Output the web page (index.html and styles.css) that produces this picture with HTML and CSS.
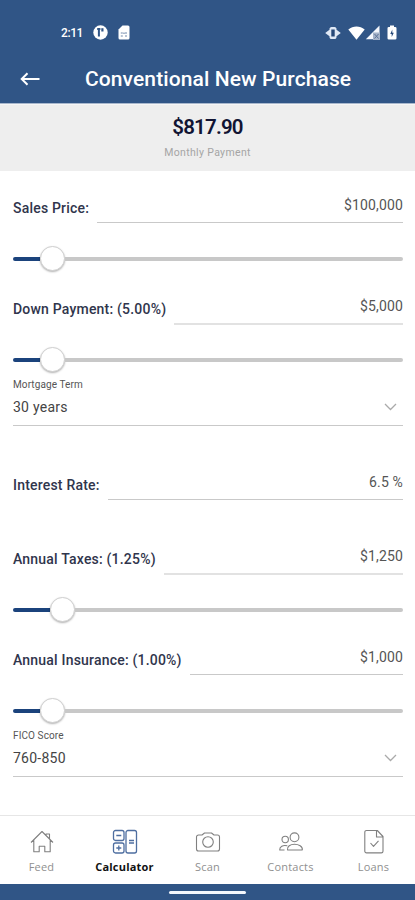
FILE: index.html
```html
<!DOCTYPE html>
<html lang="en">
<head>
<meta charset="utf-8">
<title>Conventional New Purchase</title>
<link rel="stylesheet" href="styles.css">
</head>
<body>
<div class="app">
  <header class="header">
    <div class="status">
      <span class="time">2:11</span>
      <svg class="s-app" width="15" height="15" viewBox="0 0 15 15"><circle cx="7.500" cy="7.500" r="7.200" fill="#fff"/><path d="M4.200 4h3.200M5.900 4v7.500" fill="none" stroke="#305586" stroke-width="2"/><path d="M8.300 3.200h2.200v3.300H8.300z" fill="#305586"/></svg>
      <svg class="s-sim" width="12" height="15" viewBox="0 0 12 15"><path d="M4.500.5H10a1.500 1.500 0 0 1 1.500 1.500v11a1.500 1.500 0 0 1-1.500 1.500H2A1.500 1.500 0 0 1 .5 13V4.500z" fill="#fff"/><path d="M2.800 8h2M7 8h2M2.800 11h2M7 11h2M6 7.500v1.500" stroke="#7189ab" stroke-width="1.200"/></svg>
      <span class="spacer"></span>
      <svg width="16" height="14" viewBox="0 0 16 14"><path d="M4.500 2.500a2 2 0 0 1 2-1.500h3a2 2 0 0 1 2 1.500v1.200L15.800 7l-4.300 3.300v1.200a2 2 0 0 1-2 1.500h-3a2 2 0 0 1-2-1.500v-1.200L.2 7l4.300-3.300z" fill="#dfe8f5"/><rect x="6.300" y="3.500" width="3.400" height="7" fill="#254878"/></svg>
      <svg class="s-wifi" width="17" height="14" viewBox="0 0 17 14"><path d="M.3 3.600C5-.6 12-.6 16.700 3.600L8.500 13.700z" fill="#fff"/></svg>
      <svg class="s-cell" width="15" height="15" viewBox="0 0 15 15"><path d="M14.500.5v13.700H.8z" fill="#f4f7fc"/><path d="M8 7.500h7V15H8z" fill="#a5b3c9"/><path d="M9.500 9l4 4.500m0-4.500l-4 4.500" stroke="#5c7398" stroke-width="1"/></svg>
      <svg class="s-batt" width="10" height="15" viewBox="0 0 10 15"><path d="M3 .5h4V2h1.200A1.300 1.300 0 0 1 9.500 3.300v9.900a1.300 1.300 0 0 1-1.300 1.300H1.800A1.300 1.300 0 0 1 .5 13.200V3.300A1.300 1.300 0 0 1 1.800 2H3z" fill="#fff"/><path d="M5.300 4.500L3.300 9h1.400v3L6.800 7.800H5.300z" fill="#254878"/></svg>
    </div>
    <div class="titlebar">
      <svg class="back" width="20" height="14" viewBox="0 0 20 14"><path d="M7.500 1.200L1.700 7l5.800 5.800M1.700 7H19.500" fill="none" stroke="#fff" stroke-width="2"/></svg>
      <h1 class="title">Conventional New Purchase</h1>
    </div>
  </header>

  <section class="summary">
    <div class="amount">$817.90</div>
    <div class="caption">Monthly Payment</div>
  </section>

  <main class="form">
    <div class="field"><span class="label">Sales Price:</span><span class="value">$100,000</span></div>
    <div class="slider"><span class="fill"></span><span class="thumb"></span><span class="track"></span></div>

    <div class="field"><span class="label">Down Payment: (5.00%)</span><span class="value light">$5,000</span></div>
    <div class="slider"><span class="fill"></span><span class="thumb"></span><span class="track"></span></div>

    <div class="select">
      <span class="select-label">Mortgage Term</span>
      <span class="select-value">30 years<svg width="13" height="8" viewBox="0 0 13 8"><path d="M1 1l5.500 5.500L12 1" fill="none" stroke="#aaa" stroke-width="1.300"/></svg></span>
    </div>

    <div class="field tall"><span class="label">Interest Rate:</span><span class="value">6.5 %</span></div>
    <div class="field tall"><span class="label">Annual Taxes: (1.25%)</span><span class="value light">$1,250</span></div>
    <div class="slider"><span class="fill wide"></span><span class="thumb"></span><span class="track"></span></div>

    <div class="field"><span class="label">Annual Insurance: (1.00%)</span><span class="value">$1,000</span></div>
    <div class="slider"><span class="fill"></span><span class="thumb"></span><span class="track"></span></div>

    <div class="select">
      <span class="select-label">FICO Score</span>
      <span class="select-value">760-850<svg width="13" height="8" viewBox="0 0 13 8"><path d="M1 1l5.500 5.500L12 1" fill="none" stroke="#aaa" stroke-width="1.300"/></svg></span>
    </div>
  </main>

  <nav class="tabs">
    <div class="tab">
      <svg width="26" height="26" viewBox="0 0 26 26"><path d="M2 13.500L13 2.500l11 11M4.800 11v11.700h5.400v-5.500h5.600v5.500h5.400V11M17 6V5h3.500v4.500"/></svg>
      <span>Feed</span>
    </div>
    <div class="tab active">
      <svg width="26" height="26" viewBox="0 0 26 26"><rect x="1.500" y="1.500" width="10.500" height="10" rx="2"/><rect x="1.500" y="14" width="10.500" height="10" rx="2"/><rect x="14" y="1.500" width="10.500" height="22.500" rx="2"/><path d="M4.300 6.500h5M4.300 19h5M6.800 16.500v5M17 11.500h5M17 14h5"/></svg>
      <span>Calculator</span>
    </div>
    <div class="tab">
      <svg width="26" height="26" viewBox="0 0 26 26"><path d="M3.500 6H7l2.500-2h7L19 6h3.500a2 2 0 0 1 2 2v12a2 2 0 0 1-2 2h-19a2 2 0 0 1-2-2V8a2 2 0 0 1 2-2z"/><circle cx="13" cy="13" r="5.300"/></svg>
      <span>Scan</span>
    </div>
    <div class="tab">
      <svg width="26" height="26" viewBox="0 0 26 26"><circle cx="16.500" cy="8.300" r="4.400"/><circle cx="7.200" cy="10.500" r="3.200"/><path d="M9.500 21c-.8-3.500 3-5.800 7-5.800s8.500 2.300 7.800 5.800zM9.300 16.800C5 15.700 1.500 17.500 1.700 21h4.800"/></svg>
      <span>Contacts</span>
    </div>
    <div class="tab">
      <svg width="26" height="26" viewBox="0 0 26 26"><path d="M5.500 1.500h10.800l5.700 6v14.700a1.700 1.700 0 0 1-1.700 1.700H5.500a1.700 1.700 0 0 1-1.700-1.700v-19a1.700 1.700 0 0 1 1.700-1.700zM15.500 1.500V8H22M9.500 14l3 3.300 5-5.500"/></svg>
      <span>Loans</span>
    </div>
  </nav>
  <div class="gesture"><span class="pill"></span></div>
</div>
</body>
</html>
```

FILE: styles.css
```css
* { box-sizing: border-box; }
body { margin: 0; background: #fff; font-family: Roboto, "Liberation Sans", sans-serif; }
svg { display: block; flex: none; }
.app { width: 415px; height: 900px; display: flex; flex-direction: column; overflow: hidden; }

.header { height: 104px; flex: none; background: #305586; border-bottom: 1px solid #a9b8cd; color: #fff; }
.status { height: 65px; display: flex; align-items: center; padding: 0 18px 0 61px; }
.time { width: 32px; font-size: 12px; font-weight: 500; letter-spacing: -.4px; }
.s-sim { margin-left: 10px; }
.spacer { flex: 1; }
.s-wifi { margin-left: 7px; }
.s-batt { margin-left: 7px; }
.titlebar { height: 28px; display: flex; align-items: center; padding-left: 20px; }
.title { margin: 0 0 0 45px; font-size: 21px; font-weight: 500; line-height: 28px; letter-spacing: .1px; white-space: nowrap; }

.summary { height: 67px; flex: none; background: #eee; border-top: 1px solid #f6f6f6; text-align: center; }
.amount { height: 24px; margin-top: 10px; line-height: 24px; font-size: 20.500px; font-weight: 600; color: #111433; letter-spacing: -.8px; }
.caption { height: 14px; margin-top: 7px; line-height: 14px; font-size: 10.500px; color: #a5a5a5; letter-spacing: .35px; }

.form { height: 644px; flex: none; padding: 0 12px 0 13px; }
.field { height: 52px; display: flex; align-items: flex-end; gap: 8px; }
.tall { height: 74px; }
.label { flex: none; padding-bottom: 7px; line-height: 16px; font-size: 14px; font-weight: 500; color: #30354c; letter-spacing: .2px; }
.value { flex: 1; height: 28px; border-bottom: 1px solid #c9c9c9; line-height: 20px; font-size: 14px; text-align: right; color: #555; letter-spacing: .15px; }
.light { height: 29px; margin-bottom: -1px; border-bottom: 2px solid #e2e2e2; }

.slider { height: 25px; margin: 23px 0 1px; display: flex; align-items: center; }
.fill { width: 27px; height: 4px; border-radius: 2px 0 0 2px; background: #1b437c; }
.wide { width: 37px; }
.thumb { width: 25px; height: 25px; border-radius: 50%; background: #fff; border: 1px solid #d0d0d0; box-shadow: 0 1px 2px rgba(0, 0, 0, .3); }
.track { flex: 1; height: 4px; border-radius: 0 2px 2px 0; background: #c8c8c8; }

.select { height: 53px; padding-top: 5px; border-bottom: 1px solid #c9c9c9; display: flex; flex-direction: column; }
.select-label { height: 14px; line-height: 14px; font-size: 10px; color: #555; letter-spacing: .1px; }
.select-value { height: 30px; padding-right: 6px; display: flex; align-items: center; justify-content: space-between; font-size: 14px; color: #444; letter-spacing: .25px; }

.tabs { height: 69px; flex: none; border-top: 1px solid #e6e6e6; display: grid; grid-template-columns: repeat(5, 83px); font-family: "Open Sans", sans-serif; }
.tab { padding-top: 13px; display: flex; flex-direction: column; align-items: center; font-size: 11px; line-height: 16px; color: #909090; letter-spacing: .2px; }
.tab svg { margin-bottom: 4px; fill: none; stroke: #808080; stroke-width: 1.100; stroke-linejoin: round; }
.active { color: #111; font-weight: 700; }
.active svg { stroke: #4e6ea0; stroke-width: 1.300; }
.gesture { height: 16px; flex: none; padding-top: 1px; background: #305586; display: flex; justify-content: center; align-items: center; }
.pill { width: 77px; height: 3px; border-radius: 2px; background: #f4f7fc; }
```
